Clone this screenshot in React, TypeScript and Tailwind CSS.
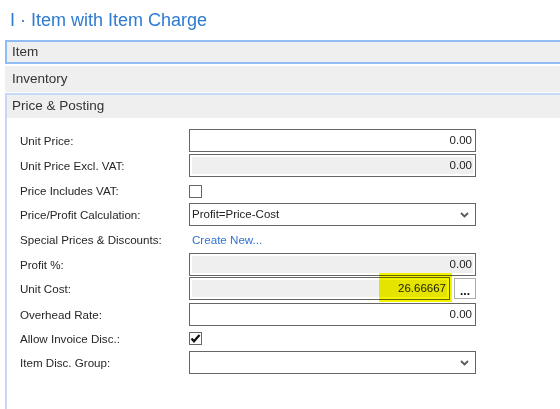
import React from "react";

const font = { fontFamily: '"Liberation Sans", Arial, sans-serif' };

function Chevron() {
  return (
    <svg width="9" height="6" viewBox="0 0 9 6" className="shrink-0">
      <path d="M1 1 L4.5 4.5 L8 1" fill="none" stroke="#5a5a5a" strokeWidth="1.8" />
    </svg>
  );
}

function TextBox({ value = "", disabled = false }: { value?: string; disabled?: boolean }) {
  return (
    <div className="w-full h-[23px] border border-[#666] bg-white p-[2px]">
      <div
        className={`h-full flex items-center justify-end pr-[1px] text-[11.5px] text-[#222] ${
          disabled ? "bg-[#efefef]" : "bg-white"
        }`}>
        {value}
      </div>
    </div>
  );
}

function Select({ value = "" }: { value?: string }) {
  return (
    <div className="w-full h-[23px] border border-[#666] bg-white flex items-center justify-between pl-[2px] pr-[6px] text-[11.5px] text-[#222]">
      <span>{value}</span>
      <Chevron />
    </div>
  );
}

function CheckBox({ checked = false }: { checked?: boolean }) {
  return (
    <div className="w-[13px] h-[13px] border border-[#666] bg-white flex items-center justify-center">
      {checked && (
        <svg width="11" height="11" viewBox="0 0 11 11">
          <path d="M1.5 5.5 L4 8.3 L9.5 2" fill="none" stroke="#111" strokeWidth="2.2" />
        </svg>
      )}
    </div>
  );
}

function Row({
  label,
  h,
  children,
}: {
  label: string;
  h: string;
  children: React.ReactNode;
}) {
  return (
    <div className={`flex items-start ${h}`}>
      <div className="w-[169px] h-[23px] flex items-center text-[11.6px] text-[#262626] shrink-0">
        {label}
      </div>
      <div className="w-[287px] h-[23px] flex items-center">{children}</div>
    </div>
  );
}

export default function App() {
  return (
    <div className="w-[560px] h-[409px] bg-white overflow-hidden" style={font}>
      {/* Title */}
      <div className="h-[40px] pt-[10px] pl-[10px] text-[18px] leading-[20px] text-[#2e7bd3]">
        I · Item with Item Charge
      </div>

      <div className="ml-[5px]">
        {/* Item header (focused) */}
        <div className="h-[24px] border-2 border-r-0 border-[#92bdf2] bg-[#efefef] flex items-center pl-[5px] text-[13.5px] text-[#333]">
          Item
        </div>
        <div className="h-[26px] mt-[2px] bg-[#efefef] flex items-center pl-[7px] text-[13.5px] text-[#333]">
          Inventory
        </div>

        {/* Price & Posting section */}
        <div className="mt-[1px] border-l-2 border-t-2 border-[#c6d9f4] h-[320px]">
          <div className="h-[23px] bg-[#efefef] flex items-center pl-[5px] text-[13.5px] text-[#333]">
            Price &amp; Posting
          </div>

          <div className="pt-[11px] pl-[13px]">
            <Row label="Unit Price:" h="h-[25px]">
              <TextBox value="0.00" />
            </Row>
            <Row label="Unit Price Excl. VAT:" h="h-[25px]">
              <TextBox value="0.00" disabled />
            </Row>
            <Row label="Price Includes VAT:" h="h-[24px]">
              <div className="pt-[1px]">
                <CheckBox />
              </div>
            </Row>
            <Row label="Price/Profit Calculation:" h="h-[25px]">
              <Select value="Profit=Price-Cost" />
            </Row>
            <Row label="Special Prices & Discounts:" h="h-[25px]">
              <span className="pl-[3px] text-[11.6px] text-[#2f74d0]">Create New...</span>
            </Row>
            <Row label="Profit %:" h="h-[24px]">
              <TextBox value="0.00" disabled />
            </Row>
            <Row label="Unit Cost:" h="h-[26px]">
              <div className="relative w-full flex items-center gap-[4px]">
                <div className="w-[261px]">
                  <TextBox value="26.66667" disabled />
                </div>
                <div className="w-[22px] h-[21px] border border-[#adadad] bg-white flex items-end justify-center text-[12px] font-bold leading-[14px] text-[#111]">
                  ...
                </div>
                {/* highlight */}
                <div className="absolute left-[190px] top-[-4px] w-[73px] h-[29px] bg-[#f4f400] mix-blend-multiply" />
              </div>
            </Row>
            <Row label="Overhead Rate:" h="h-[24px]">
              <TextBox value="0.00" />
            </Row>
            <Row label="Allow Invoice Disc.:" h="h-[24px]">
              <CheckBox checked />
            </Row>
            <Row label="Item Disc. Group:" h="h-[24px]">
              <Select />
            </Row>
          </div>
        </div>
      </div>
    </div>
  );
}
